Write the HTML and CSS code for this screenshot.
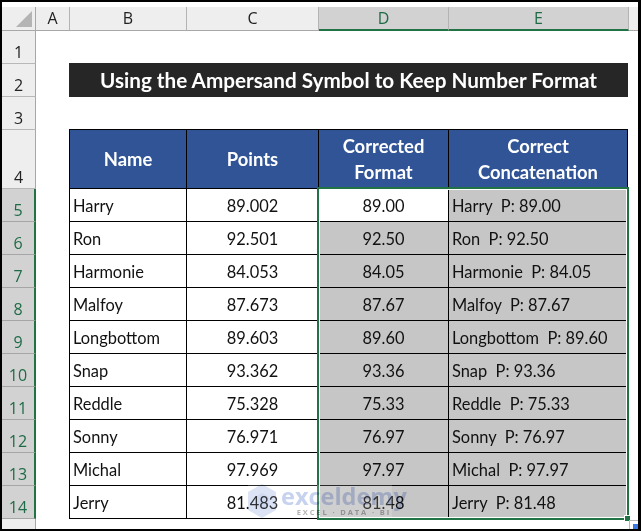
FILE: index.html
```html
<!DOCTYPE html>
<html lang="en">
<head>
<meta charset="utf-8">
<title>Using the Ampersand Symbol to Keep Number Format</title>
<link rel="stylesheet" href="styles.css">
</head>
<body>
<div class="frame">
<div class="sheet">
  <div class="corner"><svg class="corner-tri" viewBox="0 0 16 16"><path d="M16 0V16H0Z"/></svg></div>
  <div class="cols">
    <div class="ch">A</div><div class="ch">B</div><div class="ch">C</div><div class="ch sel">D</div><div class="ch sel">E</div><div class="ch rest"></div>
  </div>
  <div class="rows">
    <div class="rh">1</div>
    <div class="rh">2</div>
    <div class="rh">3</div>
    <div class="rh">4</div>
    <div class="rh sel">5</div><div class="rh sel">6</div><div class="rh sel">7</div><div class="rh sel">8</div><div class="rh sel">9</div>
    <div class="rh sel">10</div><div class="rh sel">11</div><div class="rh sel">12</div><div class="rh sel">13</div><div class="rh sel">14</div>
    <div class="rh end"></div>
  </div>
  <div class="body">
    <div class="title">Using the Ampersand Symbol to Keep Number Format</div>
    <div class="table">
      <div class="th">Name</div><div class="th">Points</div><div class="th">Corrected<br>Format</div><div class="th">Correct<br>Concatenation</div>

      <div class="td l">Harry</div><div class="td">89.002</div><div class="td">89.00</div><div class="td l g">Harry&nbsp; P: 89.00</div>
      <div class="td l">Ron</div><div class="td">92.501</div><div class="td g">92.50</div><div class="td l g">Ron&nbsp; P: 92.50</div>
      <div class="td l">Harmonie</div><div class="td">84.053</div><div class="td g">84.05</div><div class="td l g">Harmonie&nbsp; P: 84.05</div>
      <div class="td l">Malfoy</div><div class="td">87.673</div><div class="td g">87.67</div><div class="td l g">Malfoy&nbsp; P: 87.67</div>
      <div class="td l">Longbottom</div><div class="td">89.603</div><div class="td g">89.60</div><div class="td l g">Longbottom&nbsp; P: 89.60</div>
      <div class="td l">Snap</div><div class="td">93.362</div><div class="td g">93.36</div><div class="td l g">Snap&nbsp; P: 93.36</div>
      <div class="td l">Reddle</div><div class="td">75.328</div><div class="td g">75.33</div><div class="td l g">Reddle&nbsp; P: 75.33</div>
      <div class="td l">Sonny</div><div class="td">76.971</div><div class="td g">76.97</div><div class="td l g">Sonny&nbsp; P: 76.97</div>
      <div class="td l">Michal</div><div class="td">97.969</div><div class="td g">97.97</div><div class="td l g">Michal&nbsp; P: 97.97</div>
      <div class="td l">Jerry</div><div class="td">81.483</div><div class="td g">81.48</div><div class="td l g">Jerry&nbsp; P: 81.48</div>

      <div class="selection"><span class="handle"></span></div>
    </div>
    <div class="quick"><span class="quick-fill"></span></div>
    <div class="wm-patch"></div>
    <div class="watermark">
      <svg class="wm-logo" viewBox="0 0 28 34"><path d="M14 0 28 8V26L14 34 0 26V8Z" fill="#dbe3f4"/><path d="M14 9 21 13V21L14 25 7 21V13Z" fill="#cfdaf0"/></svg>
      <div class="wm-text"><div class="wm-name">exceldemy</div><div class="wm-sub">EXCEL · DATA · BI</div></div>
    </div>
  </div>
</div>
</div>
</body>
</html>
```
FILE: styles.css
```css
* { box-sizing: border-box; }
html, body { margin: 0; padding: 0; background: #000; }
.frame {
  width: 641px; height: 531px;
  border: solid #000; border-width: 2px 3px 2px 2px;
  background: #fff; overflow: hidden;
}
.sheet {
  display: grid;
  grid-template-columns: 34px 602px;
  grid-template-rows: 5px 24px 498px;
  width: 636px; height: 527px;
  font-family: Lato, "Liberation Sans", sans-serif;
  font-size: 16.4px; color: #111;
}
.corner { grid-area: 2 / 1; background: #eee; border-right: 1px solid #a8a8a8; border-bottom: 1px solid #a8a8a8; display: flex; justify-content: flex-end; align-items: flex-end; padding: 0 3px 3px 0; }
.corner-tri { width: 16px; height: 16px; fill: #b4b4b4; display: block; }
.cols { grid-area: 2 / 2; display: grid; grid-template-columns: 34px 117px 132px 130px 180px 9px; }
.ch { background: #eee; border-right: 1px solid #b4b4b4; border-bottom: 1px solid #a8a8a8;
  display: flex; align-items: center; justify-content: center;
  font: 16px "Open Sans", sans-serif; color: #222; padding-bottom: 1px; }
.ch.sel { background: #d2d2d2; color: #1e6b46; border-bottom: 2px solid #217346; padding-bottom: 0; }
.ch.rest { border-right: 0; }
.rows { grid-area: 3 / 1; display: grid; grid-template-rows: 33px 33px 33px 59px repeat(10, 33px) 10px; }
.rh { background: #eee; border-right: 1px solid #a8a8a8; border-bottom: 1px solid #b8b8b8;
  display: flex; align-items: flex-end; justify-content: center;
  font: 16px/14px "Open Sans", sans-serif; color: #222; padding-bottom: 4px; }
.rh.sel { background: #d2d2d2; color: #1e6b46; border-right: 2px solid #217346; border-bottom-color: #a6a6a6; }
.rh.end { border-bottom: 0; }
.body { grid-area: 3 / 2; position: relative; padding: 32px 0 0 33px; }
.title { width: 559px; height: 34px; background: #262626; color: #fff;
  display: flex; align-items: center; justify-content: center;
  font-weight: 700; font-size: 20.7px; margin-bottom: 32px; }
.table { display: grid; position: relative; grid-template-columns: 117px 132px 130px 179px; grid-template-rows: 59px repeat(10, 33px); width: 559px; border: solid #000; border-width: 0 1px 1px 0; }
.th, .td { border-left: 1px solid #000; border-top: 1px solid #000; display: flex; align-items: center; justify-content: center; }
.th { background: #305496; color: #fff; font-weight: 700; font-size: 18.4px; text-align: center; line-height: 26px; }
.td { background: #fff; }
.td.l { justify-content: flex-start; padding-left: 3px; }
.td.g { background: #c6c6c6; }
.selection { position: absolute; left: 248px; top: 58px; width: 312px; height: 333px; border: 2px solid #217346; box-shadow: inset 0 0 0 1px #fff; }
.handle { position: absolute; right: -4px; bottom: -4px; width: 7px; height: 7px; background: #217346; border: 1px solid #fff; }
.quick { position: absolute; left: 593px; top: 489px; width: 9px; height: 9px; border: solid #b8b8b8; border-width: 1px 0 0 1px; background: #fff; padding: 3px 0 0 3px; }
.quick-fill { display: block; width: 100%; height: 100%; background: #3b78e0; }
.wm-patch { position: absolute; left: 212px; top: 454px; width: 144px; height: 32px; background: rgba(255,255,255,.16); pointer-events: none; }
.watermark { position: absolute; left: 212px; top: 454px; width: 144px; height: 33px; display: flex; gap: 5px; align-items: flex-start; pointer-events: none; mix-blend-mode: multiply; }
.wm-logo { width: 28px; height: 34px; flex: none; margin-top: -1px; }
.wm-name { font: 700 23.5px/22px "Open Sans", sans-serif; color: #c6d2ee; }
.wm-sub { font: 700 7.5px/10px "Open Sans", sans-serif; letter-spacing: 1.9px; color: #b4b4b4; text-align: center; }
```
